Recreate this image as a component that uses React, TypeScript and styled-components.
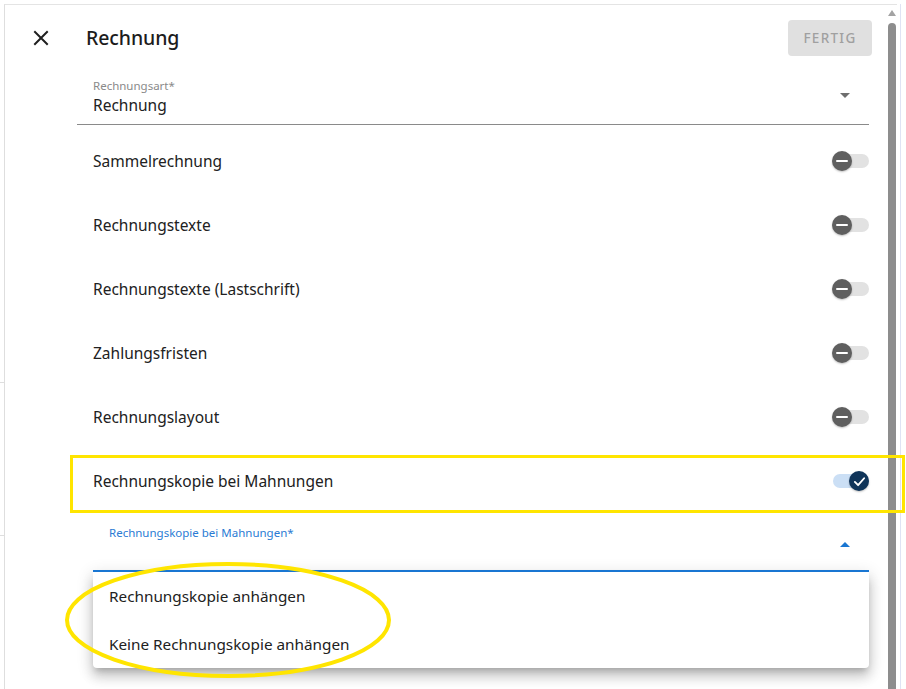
import React from "react";
import styled, { createGlobalStyle } from "styled-components";

const Global = createGlobalStyle`
  html, body { margin: 0; padding: 0; background: #ffffff; }
  body { font-family: "Noto Sans", "Open Sans", Arial, sans-serif; color: #212121; overflow: hidden; }
  * { box-sizing: border-box; }
`;

const Page = styled.div`
  position: relative;
  width: 906px;
  height: 689px;
  display: flex;
  padding-top: 4px;
  overflow: hidden;
`;

const Gutter = styled.div`
  width: 4px;
  display: flex;
  flex-direction: column;
`;

const Tick = styled.div<{ $top: number }>`
  margin-top: ${(p) => p.$top}px;
  height: 1px;
  width: 4px;
  background: #dedede;
`;

const Frame = styled.div`
  flex: 0 0 893px;
  display: flex;
  border-top: 1px solid #e4e4e4;
  border-left: 1px solid #dedede;
`;

const Content = styled.div`
  flex: 1;
  display: flex;
  flex-direction: column;
`;

const Header = styled.div`
  height: 66px;
  display: flex;
  align-items: center;
  padding: 0 15px 0 24px;
`;

const CloseBtn = styled.div`
  width: 24px;
  height: 24px;
  display: flex;
  align-items: center;
  justify-content: center;
  color: #212121;
`;

const Title = styled.div`
  margin-left: 33px;
  margin-top: -2px;
  font-size: 19.5px;
  font-weight: 500;
  color: #1c1c1c;
  flex: 1;
  letter-spacing: -0.1px;
`;

const DoneButton = styled.div`
  width: 84px;
  height: 36px;
  border-radius: 4px;
  background: #e0e0e0;
  color: #a0a0a0;
  font-size: 13.5px;
  font-weight: 500;
  letter-spacing: 1.3px;
  display: flex;
  align-items: center;
  justify-content: center;
`;

const Form = styled.div`
  padding: 0 18px 0 72px;
  display: flex;
  flex-direction: column;
`;

const Field = styled.div<{ $active?: boolean; $indent?: number }>`
  position: relative;
  margin-left: ${(p) => p.$indent ?? 0}px;
  padding: ${(p) => (p.$active ? "12px 16px 0" : "7px 16px 0")};
  height: ${(p) => (p.$active ? 59 : 54)}px;
  border-bottom: ${(p) => (p.$active ? "2px solid #1976d2" : "1px solid #8a8a8a")};
`;

const FieldLabel = styled.div<{ $active?: boolean }>`
  font-size: 11.5px;
  line-height: 16px;
  color: ${(p) => (p.$active ? "#2a7bd4" : "#8a8a8a")};
`;

const FieldValue = styled.div`
  font-size: 15.5px;
  line-height: 22px;
  color: #212121;
`;

const Arrow = styled.div<{ $up?: boolean; $top: number }>`
  position: absolute;
  right: 19px;
  top: ${(p) => p.$top}px;
  width: 0;
  height: 0;
  border-left: 5px solid transparent;
  border-right: 5px solid transparent;
  ${(p) =>
    p.$up
      ? "border-bottom: 5px solid #1976d2;"
      : "border-top: 5px solid #6e6e6e;"}
`;

const Row = styled.div`
  height: 64px;
  display: flex;
  align-items: center;
  padding-left: 16px;
  font-size: 15.5px;
  color: #212121;
`;

const RowLabel = styled.div`
  flex: 1;
`;

const Track = styled.div<{ $on?: boolean }>`
  position: relative;
  width: 36px;
  height: 14px;
  border-radius: 7px;
  background: ${(p) => (p.$on ? "#cbdff5" : "#e2e2e2")};
`;

const Thumb = styled.div<{ $on?: boolean }>`
  position: absolute;
  top: -3px;
  ${(p) => (p.$on ? "right: 0;" : "left: -1px;")}
  width: 20px;
  height: 20px;
  border-radius: 50%;
  background: ${(p) => (p.$on ? "#0f3459" : "#5f5f5f")};
  display: flex;
  align-items: center;
  justify-content: center;
  box-shadow: 0 1px 2px rgba(0, 0, 0, 0.25);
`;

const Menu = styled.div`
  margin-left: 16px;
  background: #fff;
  border-radius: 0 0 4px 4px;
  box-shadow: 0 5px 6px -3px rgba(0,0,0,0.2), 0 9px 12px 1px rgba(0,0,0,0.14), 0 3px 16px 2px rgba(0,0,0,0.12);
`;

const MenuItem = styled.div`
  height: 48px;
  display: flex;
  align-items: center;
  padding-left: 16px;
  font-size: 15.3px;
  color: #212121;
`;

const Scrollbar = styled.div`
  width: 9px;
  margin-right: 1px;
  display: flex;
  flex-direction: column;
  align-items: center;
`;

const ScrollArrow = styled.div`
  margin-top: 5px;
  width: 0;
  height: 0;
  border-left: 4px solid transparent;
  border-right: 4px solid transparent;
  border-bottom: 6px solid #a3a3a3;
`;

const ScrollThumb = styled.div`
  margin-top: 7px;
  width: 8px;
  flex: 1;
  border-radius: 4px 4px 0 0;
  background: #8d8d8d;
`;

const EdgeLine = styled.div`
  margin-left: 3px;
  width: 1px;
  background: #dfe3f4;
`;

const HighlightBox = styled.div`
  position: absolute;
  left: 70px;
  top: 455px;
  width: 835px;
  height: 58px;
  border: 3.5px solid #ffe500;
  pointer-events: none;
`;

const EllipseMark = styled.svg`
  position: absolute;
  left: 60px;
  top: 556px;
  pointer-events: none;
`;

const Minus = () => (
  <svg width="12" height="12" viewBox="0 0 12 12">
    <line x1="1" y1="6" x2="11" y2="6" stroke="#fff" strokeWidth="2" strokeLinecap="round" />
  </svg>
);

const Check = () => (
  <svg width="13" height="13" viewBox="0 0 14 14">
    <polyline points="2,7.5 5.5,11 12,3.5" fill="none" stroke="#fff" strokeWidth="2" strokeLinecap="round" strokeLinejoin="round" />
  </svg>
);

const Toggle = ({ on }: { on?: boolean }) => (
  <Track $on={on}>
    <Thumb $on={on}>{on ? <Check /> : <Minus />}</Thumb>
  </Track>
);

const rows = [
  "Sammelrechnung",
  "Rechnungstexte",
  "Rechnungstexte (Lastschrift)",
  "Zahlungsfristen",
  "Rechnungslayout",
];

export default function App() {
  return (
    <>
      <Global />
      <Page>
        <Gutter>
          <Tick $top={378} />
          <Tick $top={152} />
        </Gutter>
        <Frame>
          <Content>
            <Header>
              <CloseBtn>
                <svg width="16" height="16" viewBox="0 0 16 16">
                  <path d="M2 2 L14 14 M14 2 L2 14" stroke="#1f1f1f" strokeWidth="2" strokeLinecap="square" />
                </svg>
              </CloseBtn>
              <Title>Rechnung</Title>
              <DoneButton>FERTIG</DoneButton>
            </Header>
            <Form>
              <Field>
                <FieldLabel>Rechnungsart*</FieldLabel>
                <FieldValue>Rechnung</FieldValue>
                <Arrow $top={22} />
              </Field>
              <div style={{ height: 4 }} />
              {rows.map((r) => (
                <Row key={r}>
                  <RowLabel>{r}</RowLabel>
                  <Toggle />
                </Row>
              ))}
              <Row>
                <RowLabel>Rechnungskopie bei Mahnungen</RowLabel>
                <Toggle on />
              </Row>
              <Field $active $indent={16}>
                <FieldLabel $active>Rechnungskopie bei Mahnungen*</FieldLabel>
                <Arrow $up $top={29} />
              </Field>
              <Menu>
                <MenuItem>Rechnungskopie anhängen</MenuItem>
                <MenuItem>Keine Rechnungskopie anhängen</MenuItem>
              </Menu>
            </Form>
          </Content>
          <Scrollbar>
            <ScrollArrow />
            <ScrollThumb />
          </Scrollbar>
        </Frame>
        <EdgeLine />
        <HighlightBox />
        <EllipseMark width="340" height="130" viewBox="0 0 340 130">
          <ellipse cx="168" cy="64" rx="161" ry="56" fill="none" stroke="#ffe500" strokeWidth="4" />
        </EllipseMark>
      </Page>
    </>
  );
}
